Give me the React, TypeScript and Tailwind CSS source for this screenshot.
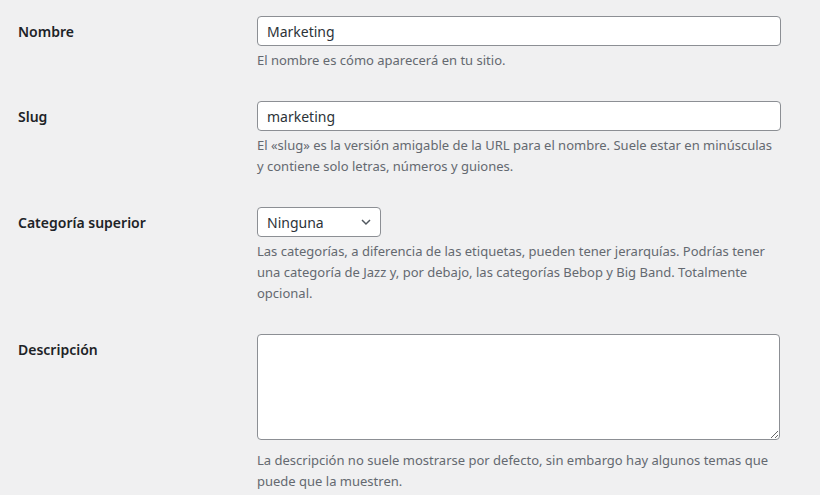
import React from 'react';

const font = { fontFamily: '"Noto Sans", "Open Sans", sans-serif' };

const Row: React.FC<{ label: string; children: React.ReactNode }> = ({ label, children }) => (
  <div className="flex">
    <div className="w-[239px] shrink-0 pt-[6px] text-[14px] leading-[20px] font-semibold text-[#1d2327]">
      {label}
    </div>
    <div className="w-[524px]">{children}</div>
  </div>
);

const Description: React.FC<{ children: React.ReactNode; className?: string }> = ({ children, className = 'mt-[4px]' }) => (
  <p className={`${className} text-[13px] leading-[21px] text-[#646970]`}>{children}</p>
);

export default function App() {
  return (
    <div className="min-h-[495px] w-[820px] bg-[#f0f0f1] pl-[18px] pt-[16px]" style={font}>
      <div className="flex flex-col gap-[30px]">
        <Row label="Nombre">
          <input
            className="block h-[30px] w-full rounded-[4px] border border-[#8c8f94] bg-white px-[9px] text-[14px] text-[#2c3338] outline-none"
            defaultValue="Marketing"
          />
          <Description>El nombre es cómo aparecerá en tu sitio.</Description>
        </Row>

        <Row label="Slug">
          <input
            className="block h-[30px] w-full rounded-[4px] border border-[#8c8f94] bg-white px-[9px] text-[14px] text-[#2c3338] outline-none"
            defaultValue="marketing"
          />
          <Description>
            El «slug» es la versión amigable de la URL para el nombre. Suele estar en minúsculas y contiene solo letras, números y guiones.
          </Description>
        </Row>

        <Row label="Categoría superior">
          <div className="flex h-[30px] w-[124px] items-center justify-between rounded-[4px] border border-[#8c8f94] bg-white pl-[9px] pr-[6px] text-[14px] text-[#2c3338]">
            <span>Ninguna</span>
            <svg width="16" height="16" viewBox="0 0 20 20">
              <path d="M5 7.5l5 5 5-5" fill="none" stroke="#50575e" strokeWidth="1.8" />
            </svg>
          </div>
          <Description>
            Las categorías, a diferencia de las etiquetas, pueden tener jerarquías. Podrías tener una categoría de Jazz y, por debajo, las categorías Bebop y Big Band. Totalmente opcional.
          </Description>
        </Row>

        <Row label="Descripción">
          <textarea
            className="block h-[106px] w-[523px] rounded-[4px] border border-[#8c8f94] bg-white px-[9px] py-[4px] text-[14px] text-[#2c3338] outline-none"
          />
          <Description className="mt-[10px]">
            La descripción no suele mostrarse por defecto, sin embargo hay algunos temas que puede que la muestren.
          </Description>
        </Row>
      </div>
    </div>
  );
}
